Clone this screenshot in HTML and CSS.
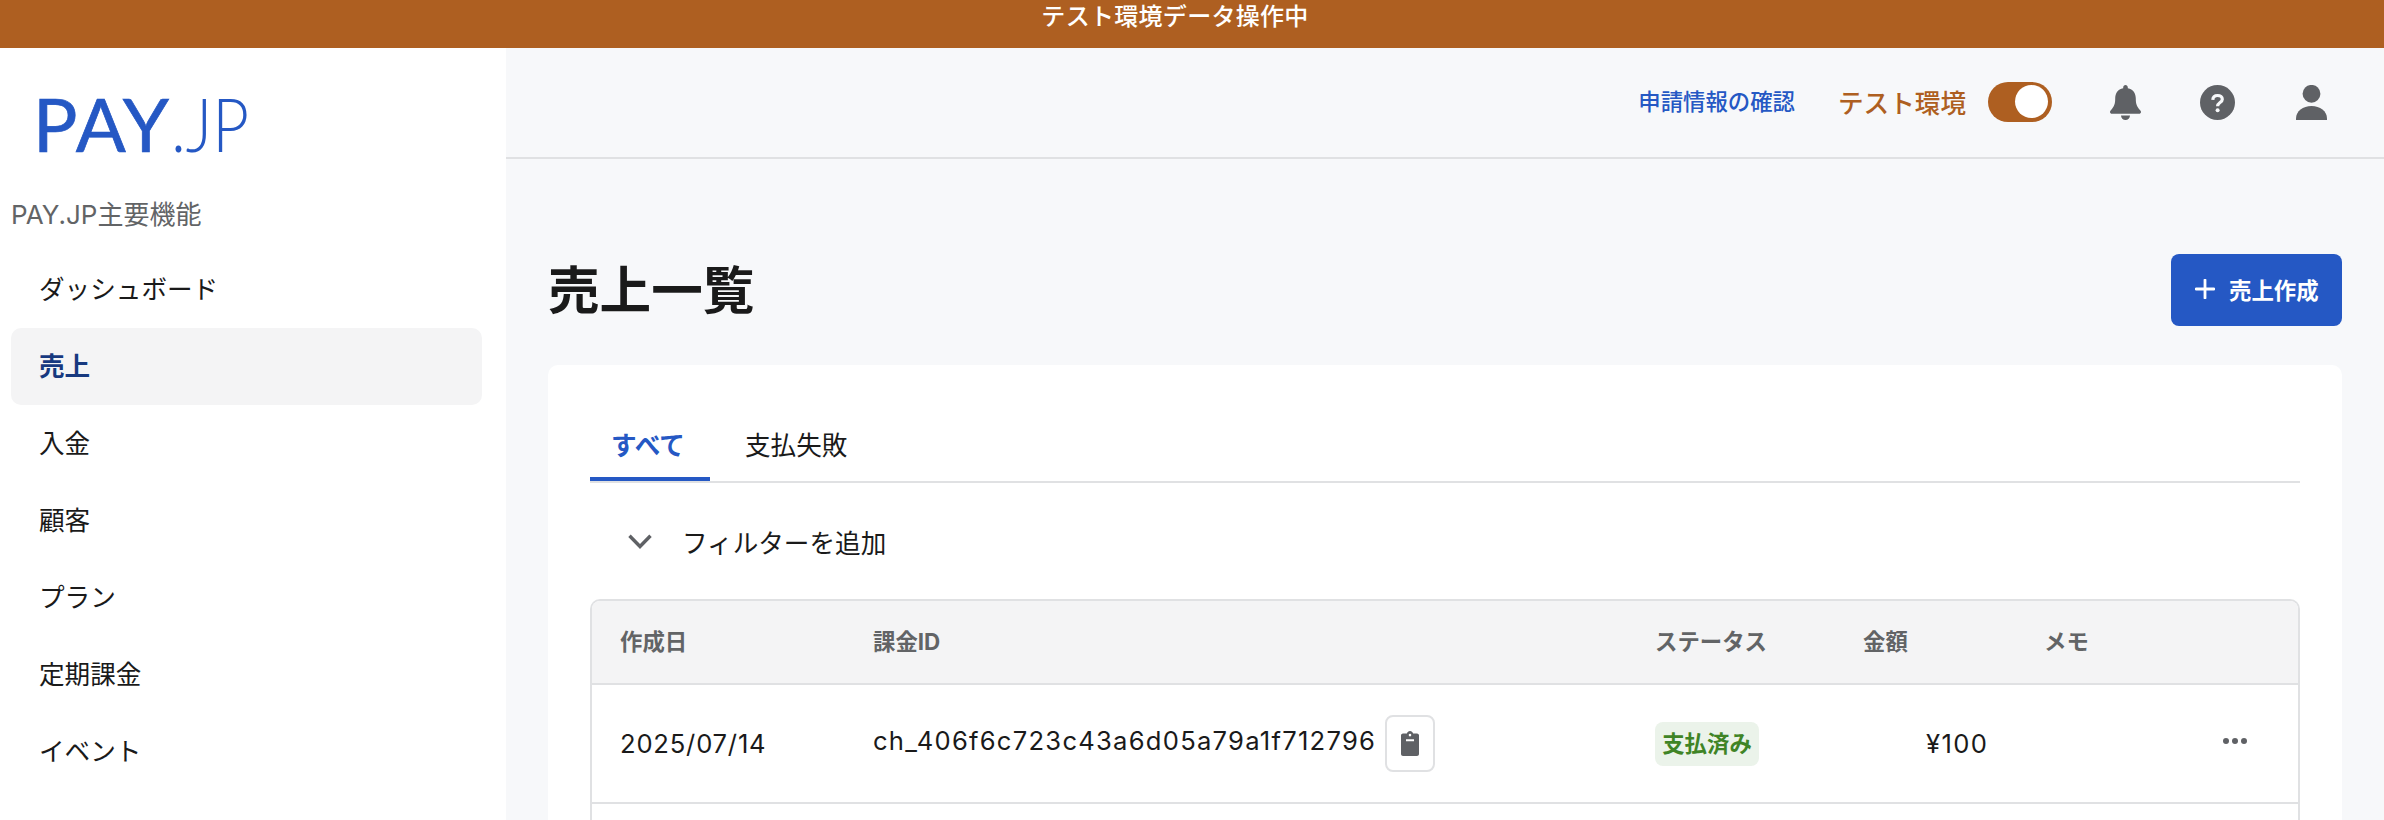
FILE: index.html
```html
<!DOCTYPE html>
<html lang="ja">
<head>
<meta charset="utf-8">
<title>売上一覧</title>
<link rel="stylesheet" href="styles.css">
</head>
<body>
<div class="banner">テスト環境データ操作中</div>
<div class="shell">
  <aside class="sidebar">
    <div class="logo"><span class="logo-pay">PAY</span><span class="logo-jp">.JP</span></div>
    <div class="section-label">PAY.JP主要機能</div>
    <nav class="nav">
      <a class="nav-item">ダッシュボード</a>
      <a class="nav-item active">売上</a>
      <a class="nav-item">入金</a>
      <a class="nav-item">顧客</a>
      <a class="nav-item">プラン</a>
      <a class="nav-item">定期課金</a>
      <a class="nav-item">イベント</a>
    </nav>
  </aside>
  <main class="main">
    <header class="topbar">
      <a class="apply-link">申請情報の確認</a>
      <span class="env-label">テスト環境</span>
      <span class="toggle"><span class="knob"></span></span>
      <svg class="top-icon bell" viewBox="0 0 31 35"><path fill="#5f6165" d="M15.500 0c1.300 0 2.300 1 2.300 2.300v.9c5.400 1 8 5.200 8 10.400 0 4.600.6 7.800 4.300 11.600.6.600.9 1.100.9 1.700 0 1.100-.9 1.800-2 1.800H2c-1.100 0-2-.7-2-1.800 0-.6.300-1.100.9-1.700 3.700-3.800 4.300-7 4.300-11.600 0-5.200 2.600-9.400 8-10.400v-.9C13.200 1 14.200 0 15.500 0zM11 30.500h9c0 2.600-2 4.500-4.500 4.500S11 33.100 11 30.500z"/></svg>
      <svg class="top-icon help" viewBox="0 0 35 35"><circle cx="17.500" cy="17.500" r="17.500" fill="#5f6165"/><path fill="none" stroke="#f7f8fa" stroke-width="3.200" d="M12.800 14.800c.2-2.900 2.200-4.300 4.800-4.300 2.800 0 4.700 1.500 4.700 3.700 0 3.400-4.700 3.200-4.700 7"/><circle cx="17.600" cy="25.300" r="2" fill="#f7f8fa"/></svg>
      <svg class="top-icon user" viewBox="0 0 31 35"><circle cx="15.500" cy="8.800" r="8.900" fill="#5f6165"/><path fill="#5f6165" d="M0 35v-1.500C0 26 7 21 15.500 21S31 26 31 33.500V35z"/></svg>
    </header>
    <div class="content">
      <div class="title-row">
        <h1 class="title">売上一覧</h1>
        <button class="create-btn"><svg class="plus" viewBox="0 0 20 20"><path d="M10 1v18M1 10h18" stroke="#fff" stroke-width="2.800" fill="none" stroke-linecap="round"/></svg><span class="create-text">売上作成</span></button>
      </div>
      <section class="card">
        <div class="tabs">
          <a class="tab selected">すべて</a>
          <a class="tab">支払失敗</a>
        </div>
        <div class="filter">
          <svg class="chevron" viewBox="0 0 24 15"><path d="M1.500 1.800 12 12.500 22.500 1.800" fill="none" stroke="#5f6165" stroke-width="3.400"/></svg>
          <span>フィルターを追加</span>
        </div>
        <div class="table">
          <div class="row head">
            <div>作成日</div>
            <div>課金ID</div>
            <div>ステータス</div>
            <div>金額</div>
            <div>メモ</div>
            <div></div>
          </div>
          <div class="row body-row">
            <div class="date">2025/07/14</div>
            <div class="charge">
              <span class="charge-id">ch_406f6c723c43a6d05a79a1f712796</span>
              <span class="copy"><svg class="clip" viewBox="0 0 18 25"><path fill="#5f6165" fill-rule="evenodd" d="M9 0c1.500 0 2.700.9 3.100 2.400H16c1.100 0 2 .9 2 2V23c0 1.100-.9 2-2 2H2c-1.100 0-2-.9-2-2V4.400c0-1.100.9-2 2-2h3.900C6.300.9 7.500 0 9 0zm0 2.800a1.300 1.300 0 1 0 0 2.600 1.300 1.300 0 0 0 0-2.600zM5 8.200v2h8v-2z"/></svg></span>
            </div>
            <div><span class="badge">支払済み</span></div>
            <div class="amount">¥100</div>
            <div></div>
            <div class="more"><svg class="dots" viewBox="0 0 24 6"><circle cx="3" cy="3" r="3" fill="#5f6165"/><circle cx="12" cy="3" r="3" fill="#5f6165"/><circle cx="21" cy="3" r="3" fill="#5f6165"/></svg></div>
          </div>
          <div class="row next-row"></div>
        </div>
      </section>
    </div>
  </main>
</div>
</body>
</html>
```
FILE: styles.css
```css
* { box-sizing: border-box; }
html, body { margin: 0; height: 820px; overflow: hidden; }
body {
  font-family: Inter, "Noto Sans CJK JP", sans-serif;
  color: #1a1a1a;
  background: #fff;
  display: flex;
  flex-direction: column;
}
.banner {
  height: 48px;
  flex: none;
  background: #ae5f21;
  color: #fff;
  font-size: 24px;
  line-height: 34px;
  text-align: center;
  font-weight: 500;
  padding-right: 34px;
  letter-spacing: 0.3px;
}
.shell { flex: 1; display: flex; min-height: 0; }

.sidebar { width: 506px; flex: none; background: #fff; padding: 0 24px 0 11px; }
.logo {
  height: 142px;
  padding: 33px 0 0 22px;
  color: #2558c4;
  font-family: Lato, sans-serif;
  font-size: 74px;
  line-height: 86px;
  white-space: nowrap;
}
.logo-pay { font-weight: 400; letter-spacing: 2px; -webkit-text-stroke: 0.7px #2558c4; }
.logo-jp {
  display: inline-block;
  font-weight: 300;
  transform: scaleX(0.86);
  transform-origin: left center;
}
.section-label {
  height: 50px;
  line-height: 50px;
  font-size: 26px;
  color: #626466;
}
.nav { margin-top: 11px; display: flex; flex-direction: column; }
.nav-item {
  height: 77px;
  line-height: 77px;
  padding-left: 28px;
  font-size: 25.6px;
  border-radius: 10px;
  color: #1a1a1a;
}
.nav-item.active { background: #f4f4f5; color: #17397f; font-weight: 700; }

.main { flex: 1; min-width: 0; background: #f7f8fa; display: flex; flex-direction: column; }
.topbar {
  height: 111px;
  flex: none;
  border-bottom: 2px solid #e0e1e3;
  display: flex;
  align-items: center;
  padding: 0 57px 2px 0;
  justify-content: flex-end;
}
.apply-link { font-size: 22.4px; font-weight: 500; color: #2558c4; margin: 0 43px 3px 0; }
.env-label { font-size: 25.6px; font-weight: 500; color: #ae5f21; margin: 0 22px 0 0; }
.toggle {
  width: 64px;
  height: 40px;
  border-radius: 20px;
  background: #ae5f21;
  display: flex;
  align-items: center;
  justify-content: flex-end;
  padding-right: 4px;
  margin-right: 58px;
}
.knob { width: 33px; height: 33px; border-radius: 50%; background: #fff; }
.top-icon { height: 35px; display: block; margin-top: 2px; }
.bell { width: 31px; margin-right: 59px; }
.help { width: 35px; margin-right: 61px; }
.user { width: 31px; }

.content { flex: 1; padding: 95px 42px 0; min-height: 0; display: flex; flex-direction: column; }
.title-row { height: 72px; display: flex; align-items: center; justify-content: space-between; margin-bottom: 39px; flex: none; }
.title { margin: 0; font-size: 51.6px; line-height: 72px; font-weight: 700; color: #1a1a1a; }
.create-btn {
  width: 171px;
  height: 72px;
  border: 0;
  border-radius: 8px;
  background: #2558c4;
  color: #fff;
  font: 700 22.4px Inter, "Noto Sans CJK JP", sans-serif;
  display: flex;
  align-items: center;
  padding: 0 0 3px 24px;
}
.plus { width: 20px; height: 20px; margin-right: 14px; }

.card {
  flex: 1;
  background: #fff;
  border-radius: 10px 10px 0 0;
  padding: 40px 42px 0;
}
.tabs { height: 78px; display: flex; border-bottom: 2px solid #e0e1e3; }
.tab {
  height: 76px;
  line-height: 81px;
  font-size: 25.6px;
  padding: 0 21px 0 0;
  margin-left: 35px;
}
.tab.selected { color: #2558c4; font-weight: 700; border-bottom: 4px solid #2558c4; height: 76px; width: 120px; margin-left: 0; padding: 0 0 0 21px; }
.filter {
  height: 116px;
  display: flex;
  align-items: center;
  padding-left: 38px;
  font-size: 25.6px;
}
.chevron { width: 24px; height: 15px; margin-right: 30px; }
.table {
  border: 2px solid #e0e1e3;
  border-bottom: 0;
  border-radius: 10px 10px 0 0;
  overflow: hidden;
}
.row { display: grid; grid-template-columns: 281px 782px 208px 181px 1fr 75px; align-items: center; }
.row > div:first-child { padding-left: 28px; }
.head {
  height: 84px;
  background: #f4f4f5;
  border-bottom: 2px solid #e0e1e3;
  font-size: 22.4px;
  font-weight: 700;
  color: #626466;
  padding-bottom: 4px;
}
.body-row { height: 119px; border-bottom: 2px solid #e0e1e3; }
.next-row { height: 40px; }
.date { font-size: 25.6px; letter-spacing: 0.8px; }
.charge { display: flex; align-items: center; font-size: 25.6px; letter-spacing: 1.25px; }
.charge-id { margin: 0 9px 6px 0; }
.copy {
  width: 50px;
  height: 57px;
  border: 2px solid #e0e1e3;
  border-radius: 8px;
  display: flex;
  align-items: center;
  justify-content: center;
}
.clip { width: 18px; height: 25px; }
.badge {
  display: inline-block;
  width: 104px;
  height: 44px;
  line-height: 44px;
  text-align: center;
  border-radius: 8px;
  background: #ebf3ea;
  color: #3f8426;
  font-size: 22.4px;
  font-weight: 700;
}
.amount { font-size: 25.6px; letter-spacing: 1.4px; padding-left: 63px; }
.dots { width: 24px; height: 6px; display: block; margin-bottom: 6px; }
.more { display: flex; }
```
